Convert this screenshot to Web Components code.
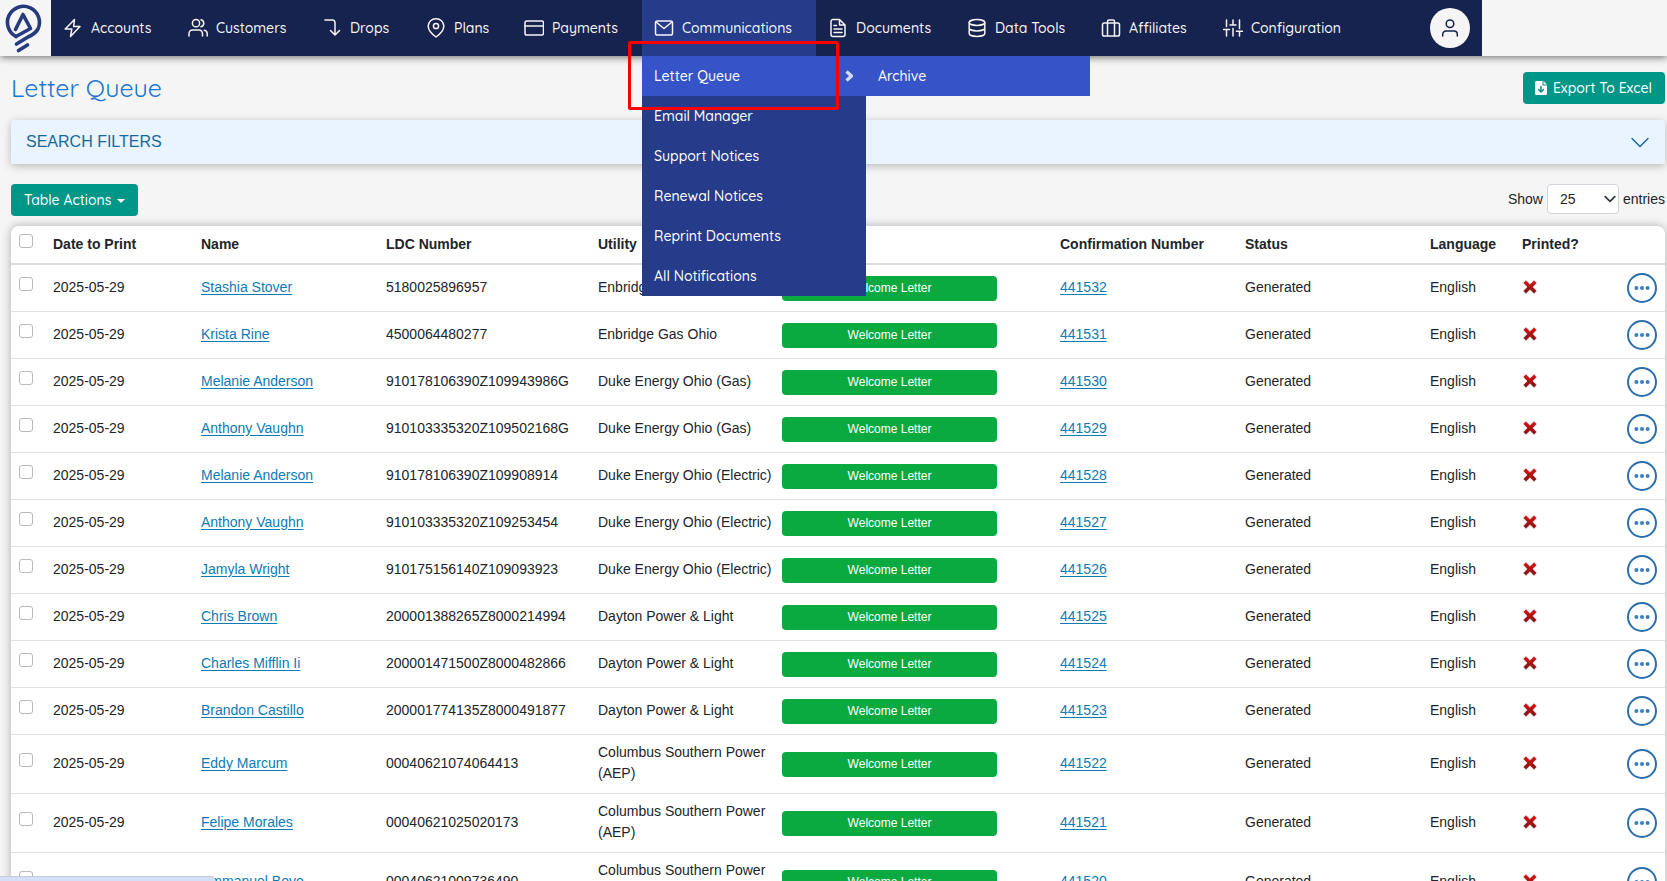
<!DOCTYPE html>
<html lang="en">
<head>
<meta charset="utf-8">
<title>Letter Queue</title>
<style>
html {
    height: 100%;
    overflow: hidden;
}

body {
    margin: 0;
    background: #f5f5f5;
    color: #212529;
    font: 14px/21px "Liberation Sans", Arial, sans-serif;
    --brand-font: Quicksand, Lato, sans-serif;
    --navy: #17234f;
    --indigo: #263b89;
    --blue: #3654c7;
    --teal: #009688;
}
</style>
</head>
<body>
<app-bar>
    <nav-item icon="bolt">Accounts</nav-item>
    <nav-item icon="users">Customers</nav-item>
    <nav-item icon="drop">Drops</nav-item>
    <nav-item icon="pin">Plans</nav-item>
    <nav-item icon="card">Payments</nav-item>
    <nav-item icon="mail" active>Communications
        <nav-menu slot="menu"></nav-menu>
    </nav-item>
    <nav-item icon="document">Documents</nav-item>
    <nav-item icon="database">Data Tools</nav-item>
    <nav-item icon="case">Affiliates</nav-item>
    <nav-item icon="sliders">Configuration</nav-item>
</app-bar>
<queue-page>
    <span slot="title">Letter Queue</span>
    <action-button slot="export" icon="file">Export To Excel</action-button>
    <filter-panel>Search Filters</filter-panel>
    <table-toolbar></table-toolbar>
    <letter-table></letter-table>
</queue-page>
<link-status></link-status>

<script>
const define = (name, html, setup) => {
    const template = document.createElement("template")
    template.innerHTML = html
    customElements.define(name, class extends HTMLElement {
        constructor() {
            super()
            const shadow = this.attachShadow({ mode: "open" })
            shadow.appendChild(template.content.cloneNode(true))
            if (setup) setup(this, shadow)
        }
    })
}

const icons = {
    bolt: '<path d="M11.5 1.5 2.2 11h6.6l-1.3 7.5L17 8.6h-6.4z"/>',
    users: '<circle cx="8" cy="5.2" r="3.6"/><path d="M1 18v-2.5A3.5 3.5 0 0 1 4.5 12H11a3.5 3.5 0 0 1 3.5 3.5V18M13 1.7a3.6 3.6 0 0 1 0 7M16.300 12.2A3.5 3.5 0 0 1 19.200 15.5V18"/>',
    drop: '<path d="M3 2h7.5A2.5 2.5 0 0 1 13 4.500V17M8.500 12.500 13 17l4.500-4.500"/>',
    pin: '<path d="M10 19s7.800-5.600 7.800-11A7.500 7.500 0 0 0 10 .8 7.500 7.500 0 0 0 2.200 8c0 5.400 7.800 11 7.800 11z"/><circle cx="10" cy="8" r="2.600"/>',
    card: '<rect x="1" y="3" width="18.500" height="14" rx="1.800"/><path d="M1 8h18.500"/>',
    mail: '<rect x="1.500" y="3" width="17" height="14" rx="1.800"/><path d="m2 4 8 6.500L18 4"/>',
    document: '<path d="M11.500 1.500H5a2 2 0 0 0-2 2v13a2 2 0 0 0 2 2h10a2 2 0 0 0 2-2V7zV7H17M6 7.500h2.500M6 11h8M6 14.500h8"/>',
    database: '<ellipse cx="10" cy="4.500" rx="7.800" ry="2.900"/><path d="M2.200 4.500v11c0 1.600 3.500 2.900 7.800 2.900s7.800-1.300 7.800-2.900v-11M2.200 10c0 1.600 3.500 2.900 7.800 2.900s7.800-1.300 7.800-2.900"/>',
    case: '<rect x="1.500" y="5" width="17" height="13" rx="1.800"/><path d="M6.500 18V3.500A1.500 1.500 0 0 1 8 2h4a1.500 1.500 0 0 1 1.500 1.500V18"/>',
    sliders: '<path d="M3.500 18v-6M3.500 8.500V2M10 18v-7.500M10 7V2M16.500 18v-4M16.500 10.500V2M.5 11.500h6M7 7h6M13.500 13.300h6"/>',
    user: '<circle cx="10" cy="5.800" r="3.800"/><path d="M2.700 18v-1.700A3.300 3.300 0 0 1 6 13h8a3.300 3.300 0 0 1 3.300 3.300V18"/>',
    file: '<path fill="currentColor" stroke="none" d="M5.500 3h6v4.500H16V15.500a1.500 1.500 0 0 1-1.500 1.500h-9A1.500 1.500 0 0 1 4 15.500v-11A1.500 1.500 0 0 1 5.500 3zM12.500 3 16 6.500h-3.500z"/><path stroke="#009688" d="M10 8.500v5M7.500 11.500l2.500 2.500 2.500-2.500"/>',
    down: '<path d="m2 6.500 8 8 8-8"/>',
    caret: '<path stroke-width="3" d="m2 6 8 8 8-8"/>',
    chevron: '<path stroke-width="3.200" stroke-linecap="butt" d="m6.500 5.500 5 4.500-5 4.500"/>',
    dots: '<g fill="currentColor" stroke="none"><circle cx="4.400" cy="10" r="2"/><circle cx="10" cy="10" r="2"/><circle cx="15.600" cy="10" r="2"/></g>',
    cross: `<defs><linearGradient id="red" x2="0" y2="1"><stop stop-color="#e01212"/><stop offset="1" stop-color="#7d1212"/></linearGradient></defs>
        <path fill="url(#red)" stroke="#ddd" stroke-width="1" d="M5 1.500 10 6.500 15 1.500 18.500 5 13.700 10 18.500 15 15 18.500 10 13.500 5 18.500 1.500 15 6.300 10 1.500 5z"/>`
}

define("ui-icon", `
<style>
:host {
    display: inline-flex;
    flex: none;
    width: 20px;
    height: 20px;
}

svg {
    width: 100%;
    height: 100%;
    fill: none;
    stroke: currentColor;
    stroke-width: 1.5;
    stroke-linecap: round;
    stroke-linejoin: round;
}
</style>
<svg viewBox="0 0 20 20" aria-hidden="true"></svg>
`, (host, shadow) => {
    shadow.querySelector("svg").innerHTML = icons[host.getAttribute("name")] || ""
})

define("brand-logo", `
<style>
:host {
    display: flex;
    width: 51px;
    height: 56px;
    background: #f5f5f5;
}

a {
    display: block;
}
</style>
<a href="#" aria-label="Home">
    <svg width="51" height="56" viewBox="0 0 51 56" fill="none" stroke="#263b7d" stroke-width="3.600" stroke-linecap="round" stroke-linejoin="round">
        <path d="M16 36.500A16 16 0 1 1 38 29Q35 34 28 37L16.500 44"/>
        <path d="M15.500 29.500 23 14.500l7.500 14L16 36.500"/>
        <path d="m18.500 50.500 9-5.500"/>
    </svg>
</a>
`)

define("app-bar", `
<style>
:host {
    display: flex;
    position: relative;
    z-index: 2;
    height: 56px;
    box-shadow: 0 1px 8px rgba(0, 0, 0, 0.6);
    background: #f5f5f5;
}

nav {
    display: grid;
    grid-template-columns: 125px 134px 104px 98px 130px 174px 139px 134px 122px 154px;
    background: var(--navy);
}

.account {
    display: flex;
    flex: 1;
    align-items: center;
    justify-content: flex-end;
    padding-right: 12px;
    background: var(--navy);
}

button {
    display: grid;
    place-items: center;
    width: 40px;
    height: 40px;
    padding: 0;
    border: 0;
    border-radius: 50%;
    background: #f5f5f5;
    color: var(--navy);
    cursor: pointer;
}

.client {
    width: 185px;
}
</style>
<brand-logo></brand-logo>
<nav><slot></slot></nav>
<div class="account">
    <button aria-label="My account"><ui-icon name="user"></ui-icon></button>
</div>
<div class="client"></div>
`)

define("nav-item", `
<style>
:host {
    display: block;
    position: relative;
    font: 500 14px/20px var(--brand-font);
}

a {
    display: flex;
    align-items: center;
    gap: 8px;
    height: 100%;
    padding-left: 12px;
    box-sizing: border-box;
    color: #f5f5f5;
    text-decoration: none;
    white-space: nowrap;
}

:host([active]) a {
    background: var(--indigo);
}
</style>
<a href="#"><ui-icon></ui-icon><slot></slot></a>
<slot name="menu"></slot>
`, (host, shadow) => {
    shadow.querySelector("ui-icon").outerHTML = `<ui-icon name="${host.getAttribute("icon")}"></ui-icon>`
})

define("nav-menu", `
<style>
:host {
    display: block;
    position: absolute;
    top: 56px;
    left: 0;
    width: 224px;
    background: var(--indigo);
}

a {
    display: flex;
    align-items: center;
    justify-content: space-between;
    height: 40px;
    padding: 0 6px 0 12px;
    color: #fff;
    text-decoration: none;
}

.open, .submenu {
    background: var(--blue);
}

.submenu {
    position: absolute;
    top: 0;
    left: 100%;
    width: 100%;
}

ui-icon {
    color: #d3dcfa;
}

/* callout round the first entry */
.callout {
    position: absolute;
    top: -15px;
    left: -14px;
    width: 205px;
    height: 63px;
    border: 3px solid #f00;
    border-radius: 2px;
    pointer-events: none;
}
</style>
<a class="open" href="#">Letter Queue <ui-icon name="chevron"></ui-icon></a>
<a href="#">Email Manager</a>
<a href="#">Support Notices</a>
<a href="#">Renewal Notices</a>
<a href="#">Reprint Documents</a>
<a href="#">All Notifications</a>
<div class="submenu"><a href="#">Archive</a></div>
<div class="callout"></div>
`)

define("action-button", `
<style>
:host {
    display: inline-block;
}

button {
    display: flex;
    align-items: center;
    gap: 4px;
    height: 32px;
    padding: 0 13px;
    border: 0;
    border-radius: 4px;
    background: var(--teal);
    color: #fff;
    font: 500 14px/20px var(--brand-font);
    cursor: pointer;
}

:host([icon]) button {
    padding-left: 8px;
    gap: 2px;
}

:host([caret]) button::after {
    content: "";
    margin: 2px 0 0 2px;
    border: 4px solid transparent;
    border-top-color: currentColor;
    border-bottom: 0;
}
</style>
<button><slot></slot></button>
`, (host, shadow) => {
    if (host.hasAttribute("icon")) {
        shadow.querySelector("button").insertAdjacentHTML("afterbegin", `<ui-icon name="${host.getAttribute("icon")}"></ui-icon>`)
    }
})

define("queue-page", `
<style>
:host {
    display: flex;
    flex-direction: column;
    padding: 16px 2px 0 11px;
}

header {
    display: flex;
    align-items: center;
    justify-content: space-between;
    margin-bottom: 16px;
}

h1 {
    margin: 0;
    color: #1976d2;
    font: 400 25px/32px var(--brand-font);
}
</style>
<header>
    <h1><slot name="title"></slot></h1>
    <slot name="export"></slot>
</header>
<slot></slot>
`)

define("filter-panel", `
<style>
:host {
    display: block;
    margin-bottom: 20px;
    border-radius: 4px 4px 0 0;
    background: #e9f4ff;
    box-shadow: 0 2px 8px rgba(0, 0, 0, 0.25);
}

button {
    display: flex;
    align-items: center;
    justify-content: space-between;
    width: 100%;
    height: 44px;
    padding: 0 15px;
    border: 0;
    background: none;
    color: #15699f;
    font: 16px/24px "Liberation Sans", Arial, sans-serif;
    text-transform: uppercase;
    cursor: pointer;
}
</style>
<button aria-expanded="false"><span><slot></slot></span><ui-icon name="down"></ui-icon></button>
`)

define("table-toolbar", `
<style>
:host {
    display: flex;
    align-items: flex-start;
    justify-content: space-between;
    margin-bottom: 10px;
}

label {
    display: flex;
    align-items: center;
    gap: 4px;
}

.select {
    display: grid;
    align-items: center;
}

.select > * {
    grid-area: 1 / 1;
}

ui-icon {
    justify-self: end;
    width: 12px;
    height: 12px;
    margin-right: 3px;
    color: #343a40;
    pointer-events: none;
}

select {
    appearance: none;
    width: 72px;
    height: 30px;
    padding: 0 12px;
    border: 1px solid #ced4da;
    border-radius: 4px;
    background: #fff;
    color: #212529;
    font: inherit;
}
</style>
<action-button caret>Table Actions</action-button>
<label>Show
    <span class="select">
        <select><option>10</option><option selected>25</option><option>50</option><option>100</option></select>
        <ui-icon name="caret"></ui-icon>
    </span>
    entries
</label>
`)

define("letter-badge", `
<style>
:host {
    display: block;
    width: 215px;
    padding: 2px 0;
    border-radius: 4px;
    background: #0aaa41;
    color: #fff;
    font-size: 12px;
    text-align: center;
}
</style>
<slot></slot>
`)

define("row-menu", `
<style>
:host {
    display: block;
}

button {
    display: grid;
    place-items: center;
    width: 30px;
    height: 30px;
    padding: 0;
    border: 2px solid #2a6ead;
    border-radius: 50%;
    background: #fff;
    color: #377dc0;
    cursor: pointer;
}
</style>
<button aria-label="Row actions"><ui-icon name="dots"></ui-icon></button>
`)

const letters = [
    ["Stashia Stover", "5180025896957", "Enbridge Gas Ohio", 441532],
    ["Krista Rine", "4500064480277", "Enbridge Gas Ohio", 441531],
    ["Melanie Anderson", "910178106390Z109943986G", "Duke Energy Ohio (Gas)", 441530],
    ["Anthony Vaughn", "910103335320Z109502168G", "Duke Energy Ohio (Gas)", 441529],
    ["Melanie Anderson", "910178106390Z109908914", "Duke Energy Ohio (Electric)", 441528],
    ["Anthony Vaughn", "910103335320Z109253454", "Duke Energy Ohio (Electric)", 441527],
    ["Jamyla Wright", "910175156140Z109093923", "Duke Energy Ohio (Electric)", 441526],
    ["Chris Brown", "200001388265Z8000214994", "Dayton Power & Light", 441525],
    ["Charles Mifflin Ii", "200001471500Z8000482866", "Dayton Power & Light", 441524],
    ["Brandon Castillo", "200001774135Z8000491877", "Dayton Power & Light", 441523],
    ["Eddy Marcum", "00040621074064413", "Columbus Southern Power (AEP)", 441522],
    ["Felipe Morales", "00040621025020173", "Columbus Southern Power (AEP)", 441521],
    ["Emmanuel Boyo", "00040621009736490", "Columbus Southern Power (AEP)", 441520]
]

define("letter-table", `
<style>
:host {
    display: block;
    border-radius: 8px 8px 0 0;
    background: #fff;
    box-shadow: 0 0 10px rgba(0, 0, 0, 0.3);
}

table {
    width: 100%;
    border-collapse: separate;
    border-spacing: 0;
    table-layout: fixed;
}

th, td {
    padding: 8px;
    text-align: left;
    vertical-align: middle;
}

th {
    border-bottom: 2px solid #dcdcde;
}

td {
    padding: 7px 8px 9px;
    border-bottom: 1px solid #dee2e6;
}

td:nth-child(5) {
    padding-right: 0;
}

td.control {
    padding: 8px 8px 8px 0;
}

td.control:last-child {
    padding-left: 8px;
}

a {
    color: #0d7bb5;
    text-underline-offset: 2px;
}

input {
    appearance: none;
    display: block;
    width: 14px;
    height: 14px;
    margin: 0 0 7px;
    border: 1px solid #b9b9b9;
    border-radius: 3px;
    background: #fff;
}

td ui-icon {
    display: flex;
    width: 16px;
    height: 16px;
}
</style>
<table>
    <colgroup>
        <col style="width: 34px"><col style="width: 148px"><col style="width: 185px"><col style="width: 212px">
        <col style="width: 192px"><col style="width: 270px"><col style="width: 185px"><col style="width: 185px">
        <col style="width: 92px"><col style="width: 105px"><col style="width: 46px">
    </colgroup>
    <thead>
        <tr>
            <th><input type="checkbox" aria-label="Select all"></th>
            <th>Date to Print</th>
            <th>Name</th>
            <th>LDC Number</th>
            <th>Utility</th>
            <th></th>
            <th>Confirmation Number</th>
            <th>Status</th>
            <th>Language</th>
            <th>Printed?</th>
            <th></th>
        </tr>
    </thead>
    <tbody></tbody>
</table>
`, (host, shadow) => {
    shadow.querySelector("tbody").innerHTML = letters.map(([name, ldc, utility, number]) => `
        <tr>
            <td><input type="checkbox" aria-label="Select ${number}"></td>
            <td>2025-05-29</td>
            <td><a href="#">${name}</a></td>
            <td>${ldc}</td>
            <td>${utility.replace("&", "&amp;")}</td>
            <td class="control"><letter-badge>Welcome Letter</letter-badge></td>
            <td><a href="#">${number}</a></td>
            <td>Generated</td>
            <td>English</td>
            <td><ui-icon name="cross"></ui-icon></td>
            <td class="control"><row-menu></row-menu></td>
        </tr>
    `).join("")
})

define("link-status", `
<style>
:host {
    position: fixed;
    z-index: 3;
    left: 0;
    bottom: 0;
    width: 215px;
    height: 4px;
    border-top: 1px solid #c4cbd9;
    border-top-right-radius: 4px;
    background: #d3e0f8;
}
</style>
`)
</script>
</body>
</html>
